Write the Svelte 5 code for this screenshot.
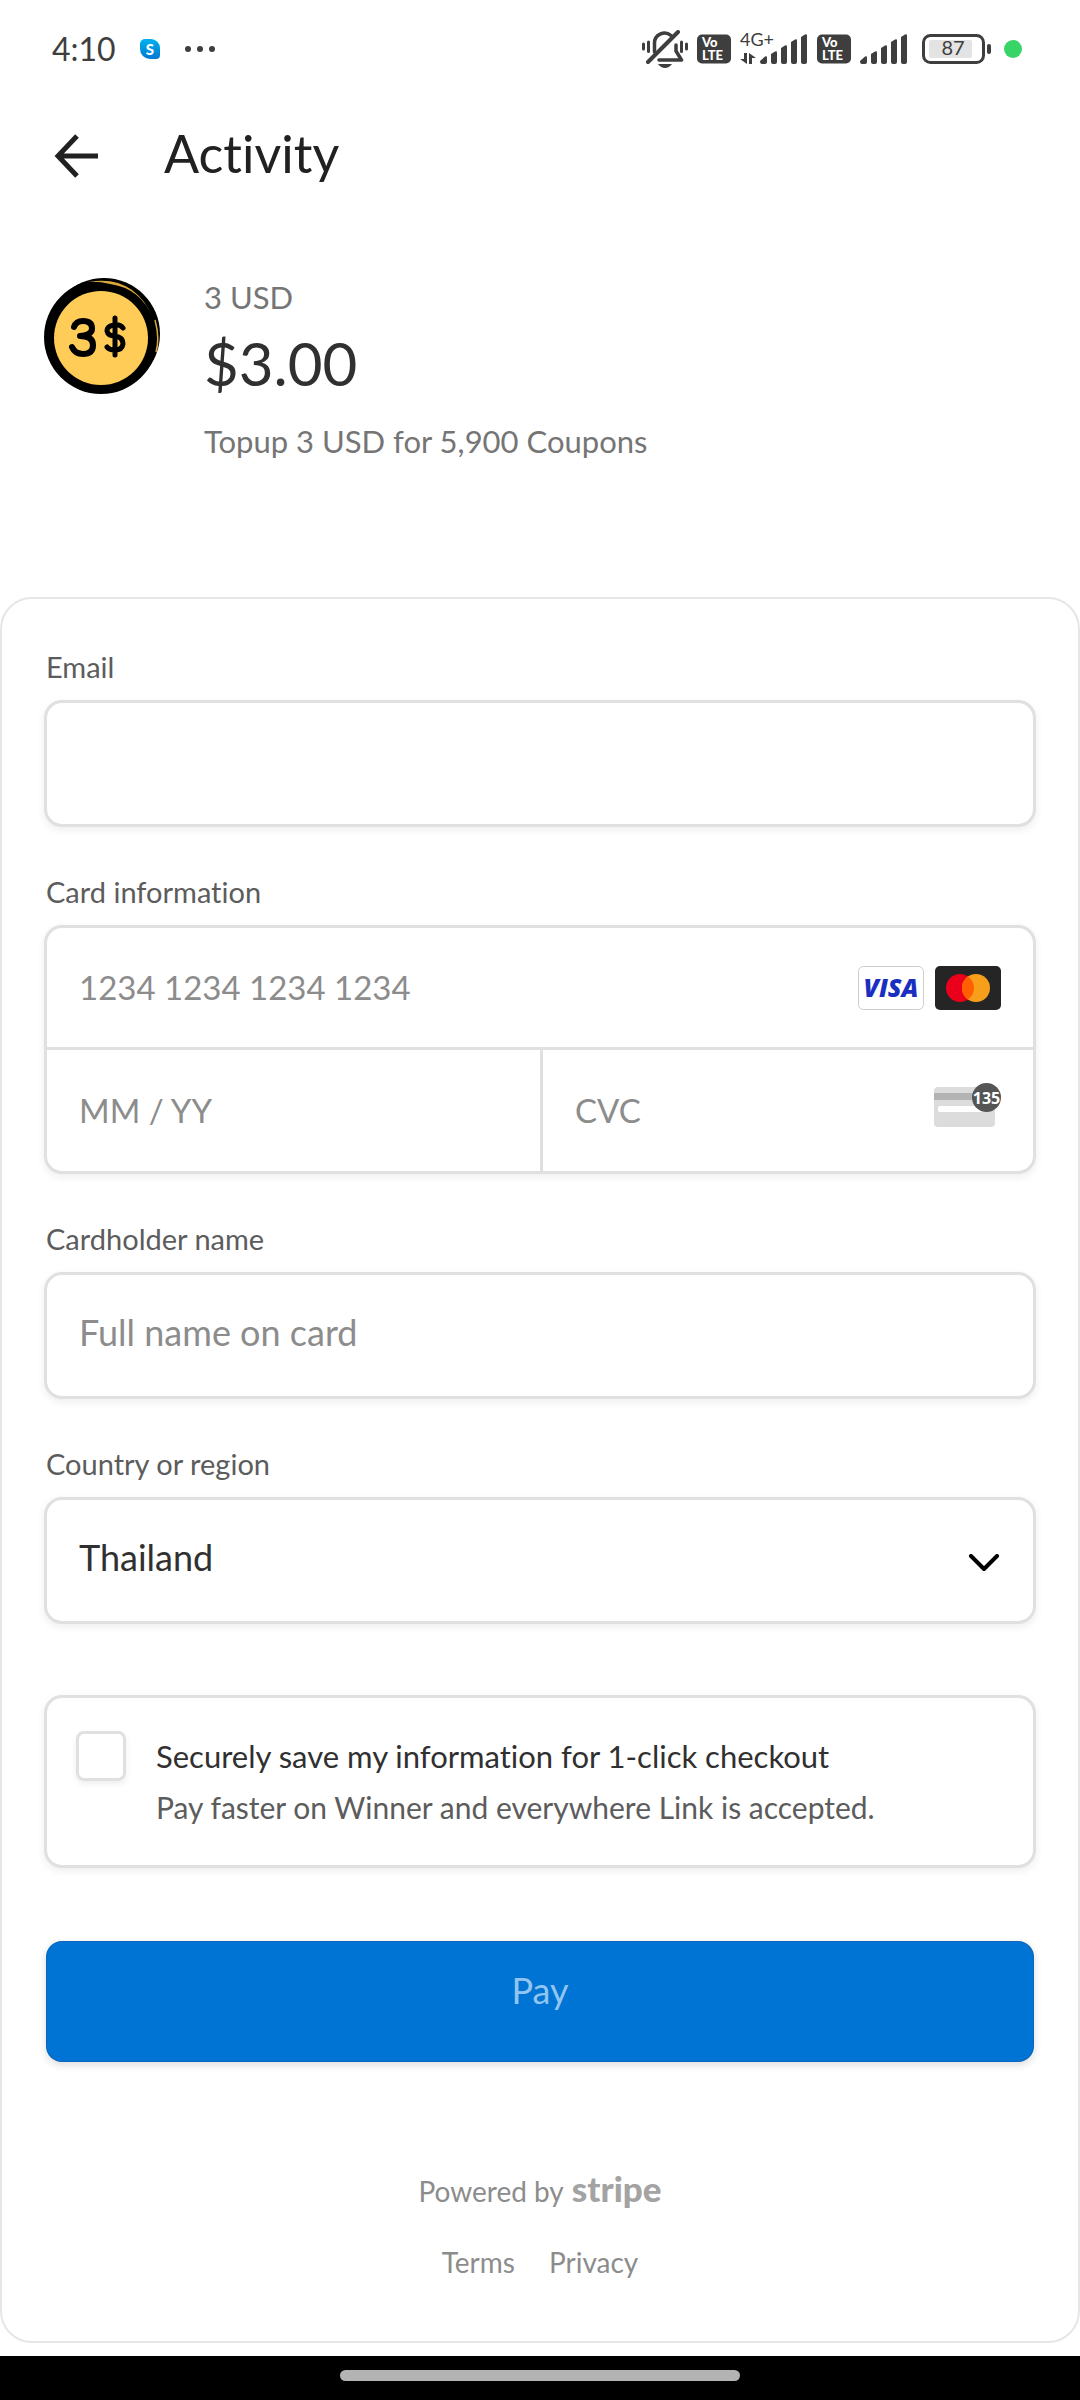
<script lang="ts">
	let email = $state('');
	let cardNumber = $state('');
	let expiry = $state('');
	let cvc = $state('');
	let name = $state('');
	let country = $state('Thailand');
	let saveInfo = $state(false);

	const countries = ['Thailand', 'Singapore', 'Malaysia', 'Vietnam'];
</script>

{#snippet volte()}
	<svg class="volte" width="34" height="30" viewBox="0 0 34 30" aria-label="VoLTE">
		<rect width="34" height="29" y="0.5" rx="5" fill="#3e3e3e" />
		<text x="5" y="13" font-size="13">Vo</text>
		<text x="5" y="26" font-size="13">LTE</text>
	</svg>
{/snippet}

{#snippet signal()}
	<svg width="48" height="30" viewBox="0 0 48 30" fill="#3e3e3e" aria-hidden="true">
		<path d="M0 27l5-4.500q2-1 2 1V28q0 2-2 2H2q-2 0-2-3z" />
		<path d="M11 20l4-2.500q2-1 2 1V28q0 2-2 2h-2q-2 0-2-2z" />
		<path d="M21 14l4-2.500q2-1 2 1V28q0 2-2 2h-2q-2 0-2-2z" />
		<path d="M31 8l4-2.500q2-1 2 1V28q0 2-2 2h-2q-2 0-2-2z" />
		<path d="M41 3l4-2.500q2-1 2 1V28q0 2-2 2h-2q-2 0-2-2z" />
	</svg>
{/snippet}

<div class="screen">
	<div class="status-bar">
		<span class="time">4:10</span>
		<svg class="skype" width="20" height="20" viewBox="0 0 20 20" aria-label="Skype">
			<defs>
				<linearGradient id="skype" x1="0" y1="0" x2="0" y2="1">
					<stop offset="0" stop-color="#00b1f0" />
					<stop offset="1" stop-color="#0078d0" />
				</linearGradient>
			</defs>
			<path
				d="M5 0h6a9 9 0 0 1 9 9v7a4 4 0 0 1-4 4H10A10 10 0 0 1 0 10V5a5 5 0 0 1 5-5z"
				fill="url(#skype)"
			/>
			<text x="10" y="15.500" font-size="15" text-anchor="middle">S</text>
		</svg>
		<svg width="32" height="8" viewBox="0 0 32 8" fill="#3e3e3e" aria-hidden="true">
			<circle cx="4" cy="4" r="3" />
			<circle cx="16" cy="4" r="3" />
			<circle cx="28" cy="4" r="3" />
		</svg>

		<div class="status-icons">
			<svg width="46" height="38" viewBox="0 0 46 38" fill="none" stroke="#3e3e3e" aria-hidden="true">
				<g stroke-width="3" stroke-linecap="round">
					<path d="M1.500 14v5M6.500 12v9.500M39.500 12v9.500M44.500 14v5" />
					<path d="M12.500 22v-8.500a10 10 0 0 1 16.500-8M34 15v6l5.500 9H17" stroke-linejoin="round" stroke-width="3.500" />
					<path d="M36 2L6 32" stroke-width="4" />
				</g>
				<path d="M16 34h14q-3 4-7 4t-7-4z" fill="#3e3e3e" stroke="none" />
			</svg>
			{@render volte()}
			<div class="network">
				<div class="network-type">
					<span>4G+</span>
					<svg width="16" height="11" viewBox="0 0 16 11" fill="#3e3e3e" aria-hidden="true">
						<path d="M4 0h3v11L0 6h4zM9 11V0l7 5h-4v6z" />
					</svg>
				</div>
				{@render signal()}
			</div>
			{@render volte()}
			{@render signal()}
			<svg class="battery" width="69" height="30" viewBox="0 0 69 30" aria-label="Battery 87%">
				<rect x="1.500" y="1.500" width="60" height="27" rx="7" fill="none" stroke="#3e3e3e" stroke-width="3" />
				<rect x="7" y="6" width="43" height="18" rx="2" fill="#e3e3e3" />
				<rect x="65" y="10" width="4" height="10" rx="2" fill="#3e3e3e" />
				<text x="31" y="21" font-size="20" text-anchor="middle">87</text>
			</svg>
			<span class="dot"></span>
		</div>
	</div>

	<header>
		<button class="back" aria-label="Back">
			<svg width="44" height="44" viewBox="0 0 44 44" fill="none" stroke="#212121" stroke-width="5">
				<path d="M23 2L4 22l19 20M4 22h40" />
			</svg>
		</button>
		<h1>Activity</h1>
	</header>

	<section class="product">
		<svg class="coin" width="116" height="116" viewBox="0 0 116 116" aria-hidden="true">
			<circle cx="60" cy="56" r="56" fill="#000" />
			<circle cx="57" cy="59" r="57" fill="#000" />
			<path d="M44 4Q90-4 109 40Q96 10 66 6Q54 3 44 4z" fill="#d9a940" />
			<path d="M111 42Q116 60 112 74" fill="none" stroke="#d9a940" stroke-width="1.500" />
			<circle cx="57" cy="60" r="47" fill="#ffcc57" />
			<g fill="none" stroke="#000" stroke-linecap="round" stroke-linejoin="round">
				<path d="M30 49Q32 43 39 43Q48 43 48 50.500Q48 57 36 58Q49 58 49 67Q49 76 39 76Q31 76 28 69" stroke-width="6" />
				<path d="M79 50Q76 46 70 47Q63 48 63 53Q64 58 71 58Q79 59 79 66Q78 72 71 72Q65 72 63 69M71 40V77" stroke-width="5" />
			</g>
		</svg>
		<div class="summary">
			<p>3 USD</p>
			<p class="price">$3.00</p>
			<p>Topup 3 USD for 5,900 Coupons</p>
		</div>
	</section>

	<form class="checkout" onsubmit={(e) => e.preventDefault()}>
		<div class="field">
			<label for="email">Email</label>
			<input id="email" class="box" type="email" bind:value={email} />
		</div>

		<div class="field">
			<label for="card-number">Card information</label>
			<div class="card-box">
				<div class="card-row">
					<input id="card-number" inputmode="numeric" placeholder="1234 1234 1234 1234" bind:value={cardNumber} />
					<div class="brands">
						<svg width="66" height="44" viewBox="0 0 66 44" aria-label="Visa">
							<rect x="0.500" y="0.500" width="65" height="43" rx="5" fill="#fff" stroke="#ccc" />
							<text class="visa" x="33" y="31" font-size="25" text-anchor="middle">VISA</text>
						</svg>
						<svg width="66" height="44" viewBox="0 0 66 44" aria-label="Mastercard">
							<rect width="66" height="44" rx="5" fill="#252525" />
							<circle cx="25" cy="22" r="14" fill="#eb001b" />
							<circle cx="41" cy="22" r="14" fill="#f79e1b" />
							<path d="M33 10.500a14 14 0 0 1 0 23a14 14 0 0 1 0-23z" fill="#ff5f00" />
						</svg>
					</div>
				</div>
				<div class="split">
					<input aria-label="Expiration" placeholder="MM / YY" bind:value={expiry} />
					<div class="cvc">
						<input aria-label="CVC" placeholder="CVC" bind:value={cvc} />
						<svg width="67" height="44" viewBox="0 0 67 44" aria-hidden="true">
							<rect y="4" width="61" height="40" rx="4" fill="#dcdcdc" />
							<rect y="10" width="61" height="7" fill="#b3b3b3" />
							<rect x="4" y="23" width="50" height="6" rx="2" fill="#fff" />
							<circle cx="52.500" cy="14.500" r="14.500" fill="#555" />
							<text class="digits" x="52.500" y="20.500" font-size="16" text-anchor="middle">135</text>
						</svg>
					</div>
				</div>
			</div>
		</div>

		<div class="field">
			<label for="name">Cardholder name</label>
			<input id="name" class="box" placeholder="Full name on card" bind:value={name} />
		</div>

		<div class="field">
			<label for="country">Country or region</label>
			<div class="select">
				<select id="country" class="box" bind:value={country}>
					{#each countries as c}
						<option>{c}</option>
					{/each}
				</select>
				<svg width="32" height="18" viewBox="0 0 32 18" fill="none" stroke="#000" stroke-width="4" stroke-linecap="round" stroke-linejoin="round" aria-hidden="true">
					<path d="M3 2l13 13L29 2" />
				</svg>
			</div>
		</div>

		<div class="save">
			<input id="save" type="checkbox" bind:checked={saveInfo} />
			<div>
				<label for="save">Securely save my information for 1-click checkout</label>
				<p>Pay faster on Winner and everywhere Link is accepted.</p>
			</div>
		</div>

		<button class="pay" type="submit">Pay</button>

		<footer>
			<a class="powered" href="#stripe">Powered by <strong>stripe</strong></a>
			<nav>
				<a href="#terms">Terms</a>
				<a href="#privacy">Privacy</a>
			</nav>
		</footer>
	</form>

	<div class="gesture-bar"><span></span></div>
</div>

<style>
	:global(body) {
		background: #fff;
	}

	.screen {
		min-height: 100vh;
		display: flex;
		flex-direction: column;
		font-family: Lato, 'Open Sans', sans-serif;
		font-variant-ligatures: none;
		color: #303030;
	}

	.screen :global(*) {
		box-sizing: border-box;
	}

	svg {
		display: block;
		flex: none;
	}

	p,
	h1 {
		margin: 0;
		font-weight: 400;
	}

	.status-bar {
		display: flex;
		align-items: center;
		height: 98px;
		padding: 0 58px 0 52px;
		color: #3e3e3e;
	}

	.time {
		font-size: 32px;
		line-height: 40px;
	}

	.skype {
		margin: 0 24px 0 24px;
	}

	.skype text {
		fill: #fff;
		font-weight: 900;
	}

	.status-icons {
		display: flex;
		align-items: center;
		gap: 9px;
		margin-left: auto;
	}

	.volte text {
		fill: #fff;
		font-weight: 900;
	}

	.network {
		display: flex;
		align-items: flex-end;
		height: 32px;
	}

	.network svg {
		margin-bottom: 1px;
	}

	.network-type {
		width: 20px;
		display: flex;
		flex-direction: column;
		gap: 6px;
		font-size: 18px;
		line-height: 16px;
		white-space: nowrap;
	}

	.battery {
		margin-left: 5px;
	}

	.battery text {
		fill: #3e3e3e;
	}

	.dot {
		width: 18px;
		height: 18px;
		margin-left: 4px;
		border-radius: 50%;
		background: #39d467;
	}

	header {
		display: flex;
		align-items: center;
		gap: 66px;
		padding: 24px 54px;
	}

	.back {
		padding: 0;
		border: none;
		background: none;
	}

	h1 {
		font-size: 52px;
		line-height: 62px;
		padding-bottom: 6px;
		color: #212121;
	}

	.product {
		display: flex;
		gap: 44px;
		padding: 64px 44px 137px;
		color: #757575;
	}

	.summary {
		font-size: 31px;
		line-height: 38px;
	}

	.summary .price {
		margin: 10px 0 22px;
		font-size: 60px;
		line-height: 74px;
		color: #303030;
	}

	.checkout {
		flex: 1;
		display: flex;
		flex-direction: column;
		padding: 50px 42px 58px;
		border: 2px solid #e6e6e6;
		border-radius: 32px;
	}

	.field {
		margin-bottom: 47px;
	}

	.field label {
		display: block;
		margin: 0 2px 16px;
		font-size: 29px;
		line-height: 35px;
		color: #5c5c5c;
	}

	input,
	select {
		min-width: 0;
		font-family: inherit;
		font-size: 36px;
		line-height: 44px;
		color: #303030;
		background: none;
		border: none;
		outline: none;
	}

	input::placeholder {
		color: #8c8c8c;
		opacity: 1;
	}

	.box,
	.card-box,
	.save {
		width: 100%;
		border: 3px solid #e0e0e0;
		border-radius: 18px;
		background: #fff;
		box-shadow: 0 3px 8px rgba(0, 0, 0, 0.07);
	}

	.box {
		display: block;
		height: 127px;
		padding: 0 32px 8px;
		appearance: none;
	}

	.card-row {
		display: flex;
		align-items: center;
		height: 119px;
	}

	.card-box input {
		flex: 1;
		height: 100%;
		padding: 0 32px 2px;
		font-size: 33px;
	}

	.split {
		display: grid;
		grid-template-columns: 1fr 1fr;
		height: 124px;
		border-top: 3px solid #e0e0e0;
	}

	.brands {
		display: flex;
		gap: 11px;
		margin-right: 32px;
	}

	.visa {
		fill: #1a2fc0;
		font-family: 'Open Sans', sans-serif;
		font-style: italic;
		font-weight: 800;
	}

	.cvc {
		min-width: 0;
		display: flex;
		align-items: center;
		border-left: 3px solid #e0e0e0;
	}

	.cvc svg {
		margin: 0 32px 12px 0;
	}

	.digits {
		fill: #fff;
		font-family: 'Open Sans', sans-serif;
		font-weight: 700;
	}

	.select {
		display: grid;
		align-items: center;
	}

	.select > * {
		grid-area: 1 / 1;
	}

	.select svg {
		justify-self: end;
		margin: 4px 36px 0 0;
		pointer-events: none;
	}

	.save {
		display: flex;
		gap: 30px;
		margin: 24px 0 73px;
		padding: 33px 29px 32px;
		font-size: 30px;
		line-height: 51px;
		color: #5c5c5c;
	}

	.save input {
		flex: none;
		width: 50px;
		height: 50px;
		margin: 0;
		appearance: none;
		border: 3px solid #e0e0e0;
		border-radius: 8px;
		box-shadow: 0 3px 6px rgba(0, 0, 0, 0.07);
	}

	.save input:checked {
		background: #0074d4;
		border-color: #0074d4;
	}

	.save label {
		display: block;
		font-size: 31px;
		color: #303030;
	}

	.pay {
		margin: 0 2px;
		padding: 27px 0 50px;
		font-family: inherit;
		font-size: 36px;
		line-height: 44px;
		color: #92c5f0;
		background: #0074d4;
		border: none;
		border-radius: 16px;
		box-shadow:
			inset 0 0 0 1px rgba(50, 50, 93, 0.2),
			0 3px 8px rgba(0, 0, 0, 0.14);
	}

	footer {
		display: flex;
		flex-direction: column;
		align-items: center;
		gap: 31px;
		margin-top: 106px;
		font-size: 28px;
		line-height: 40px;
	}

	footer a {
		color: #8c8c8c;
		text-decoration: none;
	}

	.powered {
		display: flex;
		align-items: baseline;
		gap: 8px;
	}

	.powered strong {
		font-size: 35px;
		font-weight: 900;
		color: #a3a3a3;
	}

	nav {
		display: flex;
		gap: 34px;
	}

	.gesture-bar {
		display: flex;
		justify-content: center;
		margin-top: 13px;
		padding: 14px 0 19px;
		background: #000;
	}

	.gesture-bar span {
		width: 37%;
		height: 11px;
		border-radius: 6px;
		background: #b3b3b3;
	}
</style>
